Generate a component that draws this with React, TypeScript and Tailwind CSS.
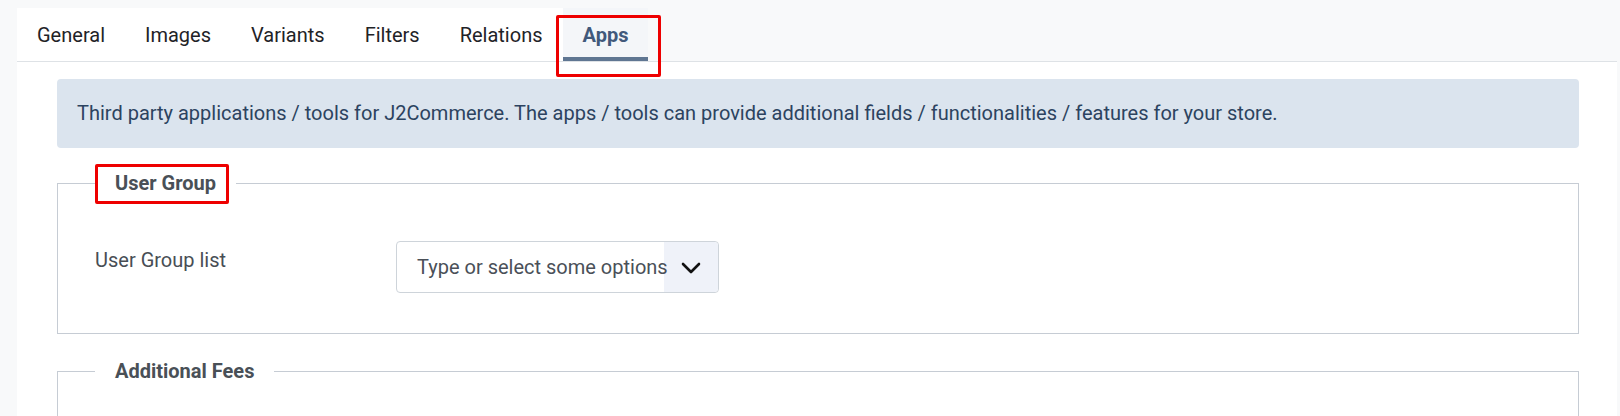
const tabs = ['General', 'Images', 'Variants', 'Filters', 'Relations']

function Legend({ title, marked = false }: { title: string; marked?: boolean }) {
  return (
    <legend className="relative px-5 text-[20px] font-bold leading-[27px] text-[#495057]">
      {title}
      {marked ? (
        <span className="pointer-events-none absolute -top-[6px] -bottom-[7px] left-0 right-[7px] rounded-[2px] border-[3px] border-[#ee0000]" />
      ) : null}
    </legend>
  )
}

export default function App() {
  return (
    <div className="h-[416px] overflow-hidden bg-[#f8f9fa] pl-[17px] pr-[3px] pt-2 font-['Roboto','Liberation_Sans',sans-serif]">
      <div className="flex h-[54px] border-b border-[#dee2e6]">
        <ul className="flex bg-white">
          {tabs.map((tab) => (
            <li key={tab} className="flex h-[53px] items-center px-5 text-[20px] text-[#1f2327]">
              {tab}
            </li>
          ))}
        </ul>
        <div className="relative flex h-[53px] items-center bg-[#f4f6f9] px-5 text-[20px] font-bold text-[#41597b]">
          Apps
          <span className="absolute inset-x-0 bottom-0 h-1 bg-[#5f7692]" />
          <span className="pointer-events-none absolute -left-[7px] -right-[13px] top-[7px] -bottom-[16px] rounded-[2px] border-[3px] border-[#ee0000]" />
        </div>
      </div>

      <div className="h-[400px] bg-white pl-10 pr-[38px] pt-[17px]">
        <div className="rounded bg-[#dbe4ee] px-5 py-[21px] text-[20px] leading-[27px] text-[#2c4360]">
          Third party applications / tools for J2Commerce. The apps / tools can provide additional fields / functionalities / features for your store.
        </div>

        <fieldset className="mt-[22px] border border-[#c6ccd4] px-[37px] pb-10 pt-11">
          <Legend title="User Group" marked />
          <div className="flex items-start">
            <label className="mt-1 w-[301px] text-[20px] leading-[30px] text-[#484e55]">User Group list</label>
            <div className="flex h-[52px] w-[323px] items-stretch rounded border border-[#ced4da] bg-white">
              <span className="relative z-10 flex min-w-0 flex-1 items-center whitespace-nowrap pl-5 text-[20px] text-[#4a5058]">
                Type or select some options
              </span>
              <span className="flex w-[54px] shrink-0 items-center justify-center rounded-r bg-[#eff2f9] pt-0.5">
                <svg width="20" height="12" viewBox="0 0 20 12" fill="none">
                  <polyline points="2,2 10,10 18,2" stroke="#111111" strokeWidth="2.6" strokeLinecap="round" strokeLinejoin="round" />
                </svg>
              </span>
            </div>
          </div>
        </fieldset>

        <fieldset className="mt-6 h-[160px] border border-[#c6ccd4] px-[37px]">
          <Legend title="Additional Fees" />
        </fieldset>
      </div>
    </div>
  )
}
